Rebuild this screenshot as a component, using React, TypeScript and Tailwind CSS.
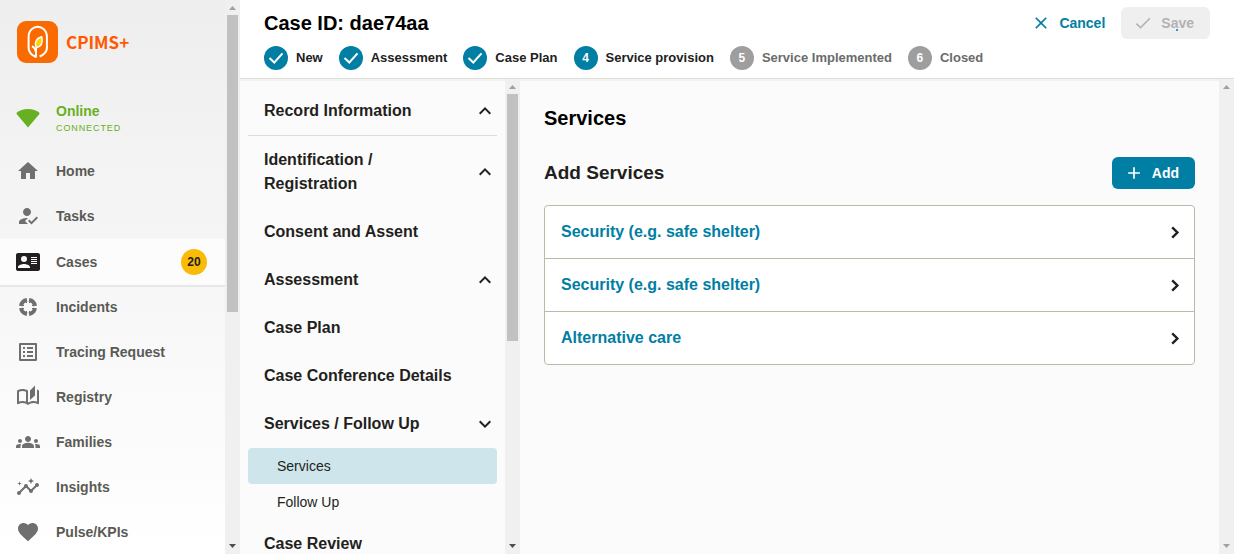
import type { ReactNode } from "react";
import {
  MdHome,
  MdHowToReg,
  MdOutlineListAlt,
  MdOutlineAutoStories,
  MdGroups,
  MdInsights,
  MdFavorite,
  MdCheck,
  MdClose,
  MdAdd,
  MdExpandLess,
  MdExpandMore,
} from "react-icons/md";

function Logo() {
  return (
    <svg viewBox="0 0 41 42" className="h-[42px] w-[41px] shrink-0" aria-hidden="true">
      <rect width="41" height="42" rx="9" fill="#f96a00" />
      <path
        d="M19 36.200C15 34.200 11.600 31 11.600 27V16C11.600 12 12.800 9.500 15.500 7.500C18.800 5.200 22.600 5.200 25.900 7.500C28.600 9.500 29.900 12 29.900 16V27C29.900 31 26.500 33.800 22.600 35.500"
        fill="none"
        stroke="#fff"
        strokeWidth="2"
      />
      <path
        d="M19 36.500V26.500M19 31C18.600 28.500 17.500 26.500 15 25.200"
        fill="none"
        stroke="#fff"
        strokeWidth="2"
      />
      <path d="M19.200 26.800C17 21.500 19.500 17 24.800 15.800C26 21 24.500 25.500 19.200 26.800Z" fill="#ffd200" stroke="#fff" strokeWidth="1.400" />
    </svg>
  );
}

function SignalIcon() {
  return (
    <svg viewBox="0 0 24 24" className="size-6" fill="currentColor" aria-hidden="true">
      <path d="M12 21.500L0.600 8V6.800C3.400 4.300 7.400 3 12 3S20.600 4.300 23.400 6.800V8Z" />
    </svg>
  );
}

function CaseCardIcon() {
  return (
    <svg viewBox="0 0 24 24" className="size-6" fill="#231e1f" aria-hidden="true">
      <path d="M2,3H22C23.05,3 24,3.95 24,5V19C24,20.05 23.05,21 22,21H2C0.95,21 0,20.05 0,19V5C0,3.95 0.95,3 2,3M15,7V8H21V7H15M15,9V10H21V9H15M15,11V12H21V11H15M15,13V14H21V13H15M8,13.91C6,13.91 2,15 2,17V18H14V17C14,15 10,13.91 8,13.91M8,6A3,3 0 0,0 5,9A3,3 0 0,0 8,12A3,3 0 0,0 11,9A3,3 0 0,0 8,6Z" />
    </svg>
  );
}

function IncidentIcon() {
  return (
    <svg viewBox="0 0 24 24" className="size-6" fill="none" stroke="currentColor" aria-hidden="true">
      <path
        strokeWidth="4"
        d="M13 5.070A7 7 0 0 1 18.930 11M18.930 13A7 7 0 0 1 13 18.930M11 18.930A7 7 0 0 1 5.070 13M5.070 11A7 7 0 0 1 11 5.070"
      />
      <path
        strokeWidth="1"
        d="M13.500 5V8M10.500 5V8M13.500 16V19M10.500 16V19M5 10.500H8M5 13.500H8M16 10.500H19M16 13.500H19"
      />
    </svg>
  );
}

function StepCheck() {
  return (
    <svg viewBox="0 0 24 24" className="size-6" fill="none" stroke="#fff" strokeWidth="2" aria-hidden="true">
      <path d="M5.500 12L10.300 16.500L18.500 7.300" />
    </svg>
  );
}

function RowArrow() {
  return (
    <svg viewBox="0 0 24 24" className="size-6" fill="none" stroke="#231f20" strokeWidth="2.400" aria-hidden="true">
      <path d="M9.200 7.300L14.400 12.500L9.200 17.700" />
    </svg>
  );
}

type NavEntry = { label: string; icon: ReactNode; count?: number };

const navEntries: NavEntry[] = [
  { label: "Home", icon: <MdHome className="size-6" /> },
  { label: "Tasks", icon: <MdHowToReg className="size-6" /> },
  { label: "Cases", icon: <CaseCardIcon />, count: 20 },
  { label: "Incidents", icon: <IncidentIcon /> },
  { label: "Tracing Request", icon: <MdOutlineListAlt className="size-6" /> },
  { label: "Registry", icon: <MdOutlineAutoStories className="size-6" /> },
  { label: "Families", icon: <MdGroups className="size-6" /> },
  { label: "Insights", icon: <MdInsights className="size-6" /> },
  { label: "Pulse/KPIs", icon: <MdFavorite className="size-6" /> },
];

const steps = [
  { label: "New", state: "done" },
  { label: "Assessment", state: "done" },
  { label: "Case Plan", state: "done" },
  { label: "Service provision", state: "current" },
  { label: "Service Implemented", state: "todo" },
  { label: "Closed", state: "todo" },
];

type Section = { label: string; arrow?: "up" | "down"; divided?: boolean; items?: string[] };

const sections: Section[] = [
  { label: "Record Information", arrow: "up", divided: true },
  { label: "Identification / Registration", arrow: "up" },
  { label: "Consent and Assent" },
  { label: "Assessment", arrow: "up" },
  { label: "Case Plan" },
  { label: "Case Conference Details" },
  { label: "Services / Follow Up", arrow: "down", items: ["Services", "Follow Up"] },
  { label: "Case Review" },
];

const services = ["Security (e.g. safe shelter)", "Security (e.g. safe shelter)", "Alternative care"];

function ScrollTrack({ thumb, atEnd = false }: { thumb?: string; atEnd?: boolean }) {
  return (
    <div className="flex w-[15px] shrink-0 flex-col items-center bg-[#f0f0f0]" aria-hidden="true">
      <div className="flex h-[15px] shrink-0 items-center">
        <svg viewBox="0 0 7 4" className="h-1 w-[7px]" fill="#a0a0a0">
          <path d="M0 4L3.500 0L7 4Z" />
        </svg>
      </div>
      <div className="min-h-0 w-[11px] flex-1">
        {thumb && <div className={`bg-[#c1c1c1] ${thumb}`} />}
      </div>
      <div className="flex h-[17px] shrink-0 items-center">
        <svg viewBox="0 0 7 4" className="h-1 w-[7px]" fill={atEnd ? "#a0a0a0" : "#505050"}>
          <path d="M0 0L3.500 4L7 0Z" />
        </svg>
      </div>
    </div>
  );
}

function Sidebar() {
  return (
    <aside className="flex w-60 shrink-0">
      <div className="min-w-0 flex-1 overflow-hidden bg-linear-to-b from-[#eeeeee] to-white">
        <div className="flex items-center gap-2 px-[17px] pt-[21px]">
          <Logo />
          <span className="font-['Noto_Sans_CJK_SC',sans-serif] text-[17px] leading-6 font-bold text-[#ff5a00]">
            CPIMS+
          </span>
        </div>
        <div className="mt-[38px] flex items-center gap-4 px-4 text-[#67b021]">
          <SignalIcon />
          <div>
            <div className="text-sm leading-5 font-bold">Online</div>
            <div className="text-[9px] leading-[14px] tracking-widest">CONNECTED</div>
          </div>
        </div>
        <nav className="mt-3.5">
          {navEntries.map((entry) => (
            <a
              key={entry.label}
              href="#"
              className={
                entry.count
                  ? "flex h-[46px] items-center gap-4 bg-[#fcfcfc] px-4 text-[#5a5a55] shadow-[0_2px_0_#e8e8e8]"
                  : "flex h-[45px] items-center gap-4 px-4 pb-px text-[#5a5a55]"
              }
            >
              <span className="text-[#6f6f6f]">{entry.icon}</span>
              <span className="flex-1 text-sm leading-5 font-bold">{entry.label}</span>
              {entry.count && (
                <span className="mr-0.5 flex size-[26px] items-center justify-center rounded-full bg-[#f9bb06] text-xs font-bold text-[#231e1f]">
                  {entry.count}
                </span>
              )}
            </a>
          ))}
        </nav>
      </div>
      <ScrollTrack thumb="h-[297px]" />
    </aside>
  );
}

function Header() {
  return (
    <header className="flex shrink-0 items-start justify-between border-b border-[#dedfd6] bg-white px-6 pb-2 shadow-[0_2px_0_#f3f3f1]">
      <div>
        <h1 className="pt-2 text-xl leading-[30px] font-bold text-black">Case ID: dae74aa</h1>
        <ol className="mt-2 flex items-center gap-4">
          {steps.map((step, index) => (
            <li key={step.label} className="flex items-center gap-2">
              <span
                className={
                  step.state === "todo"
                    ? "flex size-6 items-center justify-center rounded-full bg-[#9e9e9e] text-xs font-bold text-white"
                    : "flex size-6 items-center justify-center rounded-full bg-[#007ea3] text-xs font-bold text-white"
                }
              >
                {step.state === "done" ? <StepCheck /> : index + 1}
              </span>
              <span
                className={
                  step.state === "todo"
                    ? "text-[13px] leading-5 font-bold text-[#6b6b6b]"
                    : "text-[13px] leading-5 font-bold text-[#212121]"
                }
              >
                {step.label}
              </span>
            </li>
          ))}
        </ol>
      </div>
      <div className="flex items-center gap-4 pt-[7px]">
        <button type="button" className="flex h-8 items-center gap-2 text-sm font-bold text-[#007ea3]">
          <MdClose className="size-5" />
          Cancel
        </button>
        <button
          type="button"
          disabled
          className="flex h-8 items-center gap-2 rounded-md bg-[#efefef] pr-4 pl-3 text-sm font-bold text-[#b3b3b3]"
        >
          <MdCheck className="size-5" />
          <span className="relative">
            Save
            <span className="absolute right-4 bottom-0.5 size-0.5 bg-[#2f9dbb]" />
          </span>
        </button>
      </div>
    </header>
  );
}

function RecordNav() {
  return (
    <div className="flex w-[280px] shrink-0">
      <nav className="min-w-0 flex-1 overflow-hidden px-2 pt-2">
        {sections.map((section) => (
          <div key={section.label} className={section.divided ? "border-b border-[#dcdcdc]" : ""}>
            <button
              type="button"
              className="flex w-full items-center justify-between py-3 pl-4 text-left text-base leading-6 font-bold text-[#231f20]"
            >
              <span className="max-w-[190px]">{section.label}</span>
              {section.arrow === "up" && <MdExpandLess className="size-6" />}
              {section.arrow === "down" && <MdExpandMore className="size-6" />}
            </button>
            {section.items?.map((item, index) => (
              <a
                key={item}
                href="#"
                className={
                  index === 0
                    ? "flex h-9 items-center rounded bg-[#cde5eb] pl-[29px] text-sm text-[#231f20]"
                    : "flex h-9 items-center rounded pl-[29px] text-sm text-[#231f20]"
                }
              >
                {item}
              </a>
            ))}
          </div>
        ))}
      </nav>
      <ScrollTrack thumb="h-[247px]" />
    </div>
  );
}

function ServicesForm() {
  return (
    <main className="min-w-0 flex-1 overflow-hidden px-6 pt-6">
      <h2 className="text-xl leading-[30px] font-bold text-black">Services</h2>
      <div className="mt-6 flex items-center justify-between">
        <h3 className="text-[19px] leading-7 font-bold text-[#231f20]">Add Services</h3>
        <button
          type="button"
          className="flex h-8 items-center gap-2 rounded-md bg-[#007ea3] pr-4 pl-3 text-sm font-bold text-white"
        >
          <MdAdd className="size-5" />
          Add
        </button>
      </div>
      <ul className="mt-4 divide-y divide-[#b9bba8] rounded border border-[#b9bba8] bg-white">
        {services.map((service, index) => (
          <li key={index}>
            <button
              type="button"
              className="flex h-[52px] w-full items-center justify-between pr-[7px] pl-4 text-left text-base font-bold text-[#007ea3]"
            >
              {service}
              <RowArrow />
            </button>
          </li>
        ))}
      </ul>
    </main>
  );
}

export default function App() {
  return (
    <div className="flex h-screen overflow-hidden bg-[#fbfbfb] font-['Liberation_Sans',Arial,sans-serif]">
      <Sidebar />
      <div className="flex min-w-0 flex-1 flex-col">
        <Header />
        <div className="flex min-h-0 flex-1">
          <RecordNav />
          <ServicesForm />
          <ScrollTrack atEnd />
        </div>
      </div>
    </div>
  );
}
